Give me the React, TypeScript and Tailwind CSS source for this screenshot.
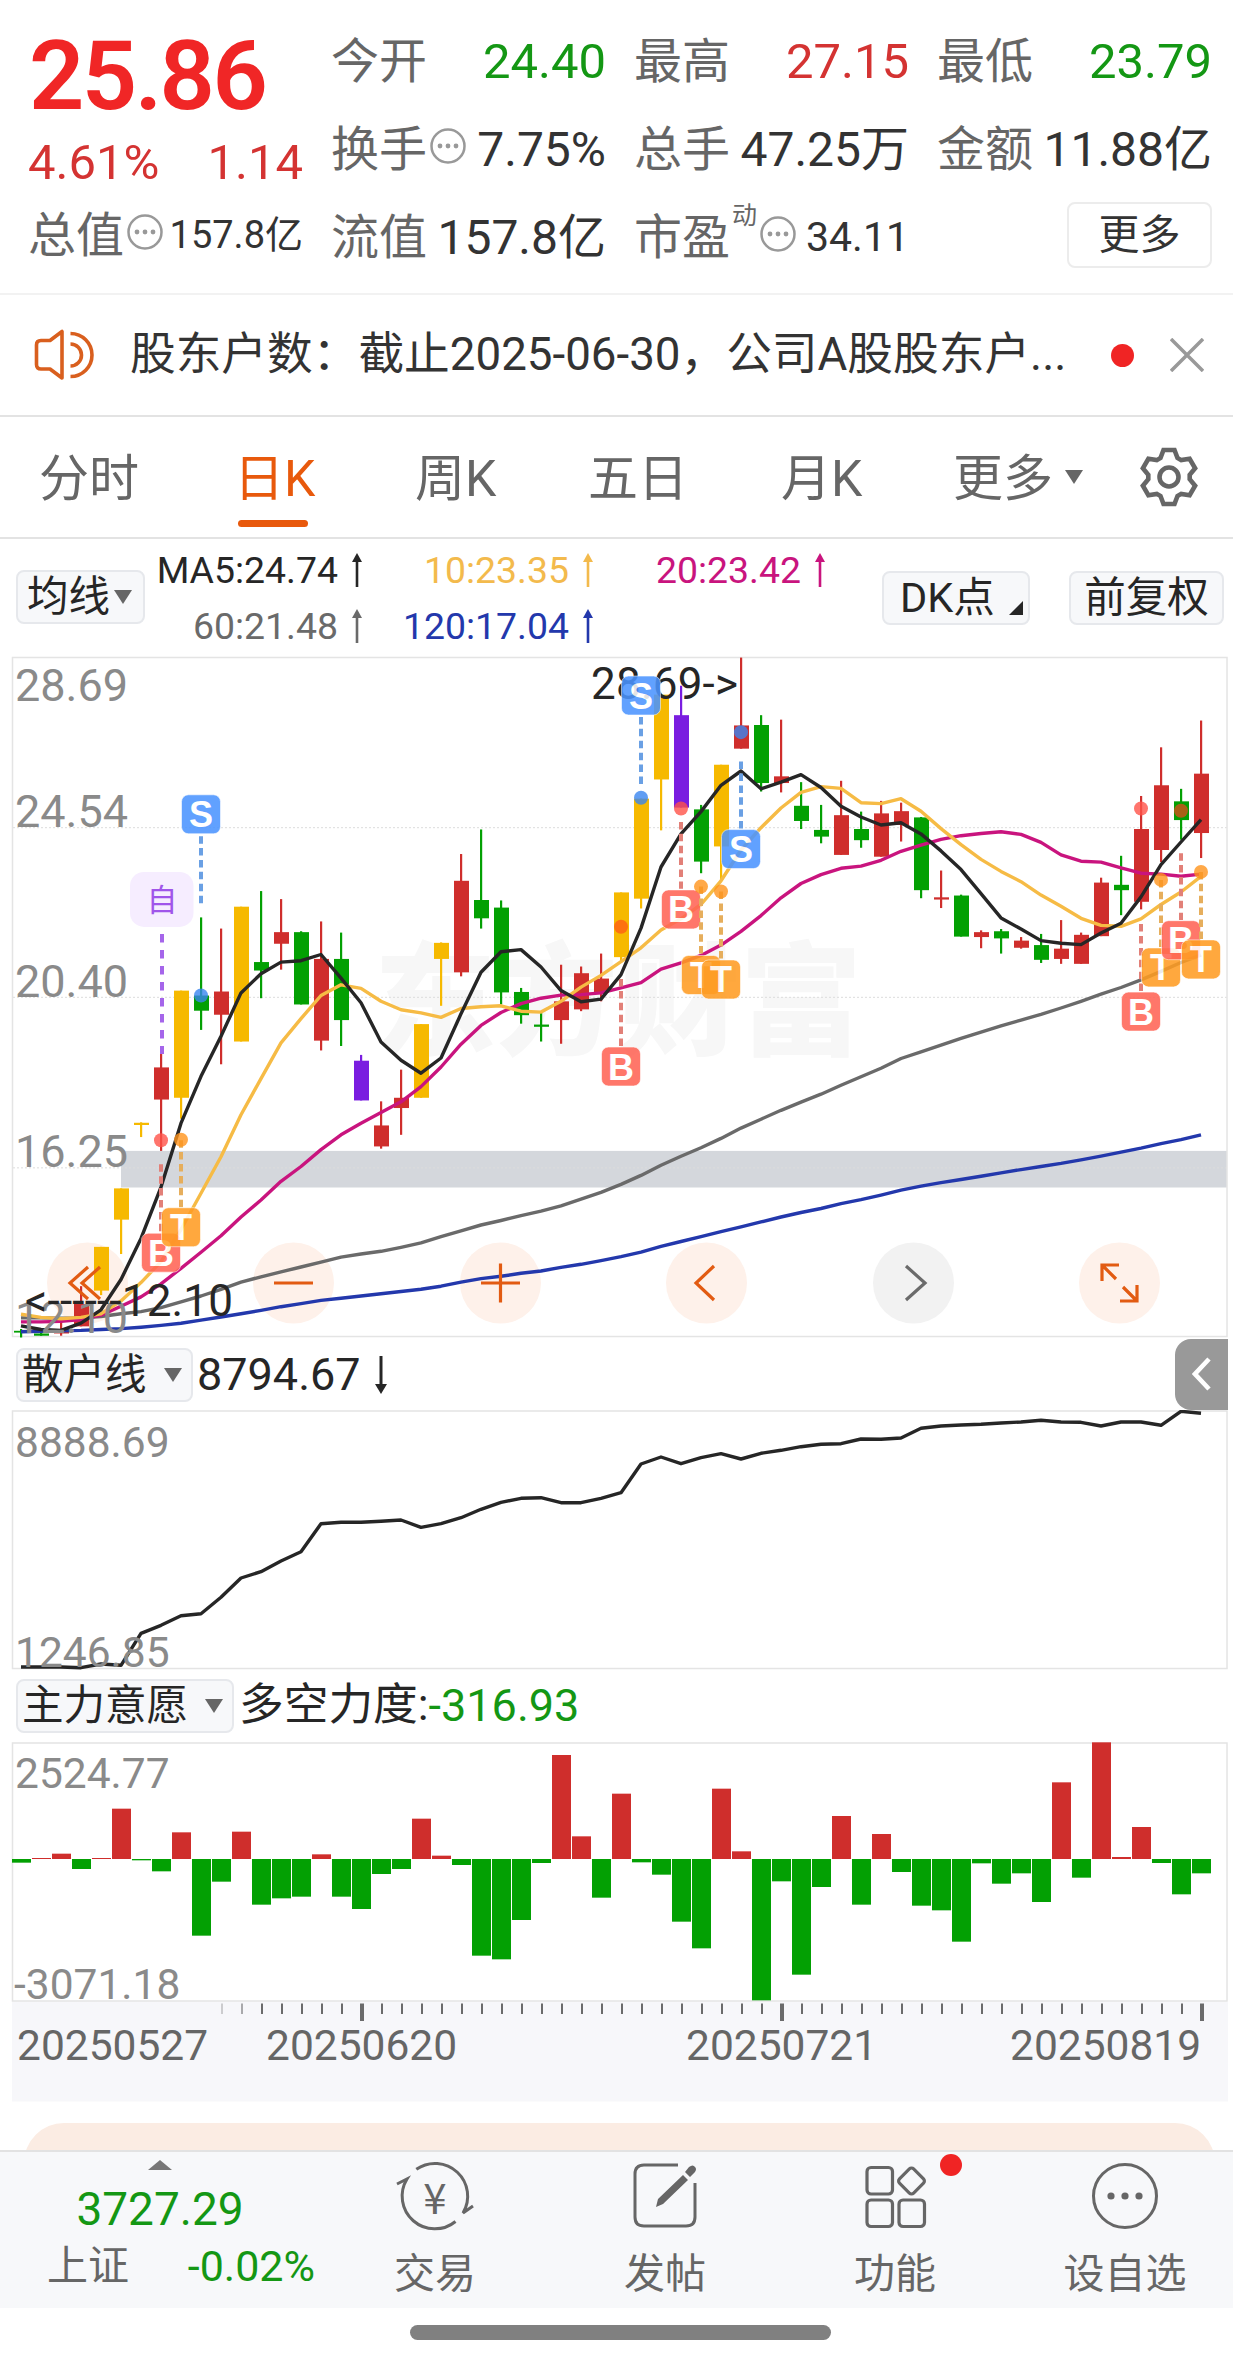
import type { ReactNode } from 'react';

const UP = '#cf2e2c';
const DOWN = '#03a003';
const LIMIT = '#f6b900';
const SPECIAL = '#7a1de0';

// 蜡烛: [颜色, 最高, 实体上沿, 实体下沿, 最低]
type Candle = [string, number, number, number, number];

const CANDLES: Candle[] = [
  [DOWN, 1521, 1525, 1529, 1540],
  [DOWN, 1530, 1531, 1536, 1536],
  [UP, 1500, 1526, 1531, 1536],
  [UP, 1425, 1465, 1515, 1515],
  [LIMIT, 1337, 1337, 1435, 1445],
  [LIMIT, 1206, 1206, 1276, 1353],
  [LIMIT, 1058, 1059, 1064, 1091],
  [UP, 905, 935, 1007, 1122],
  [LIMIT, 763, 763, 1003, 1050],
  [DOWN, 599, 774, 808, 851],
  [UP, 624, 765, 817, 928],
  [LIMIT, 575, 575, 877, 877],
  [DOWN, 540, 699, 718, 780],
  [UP, 558, 632, 658, 716],
  [DOWN, 630, 632, 794, 794],
  [UP, 608, 692, 875, 897],
  [DOWN, 633, 692, 829, 887],
  [SPECIAL, 907, 920, 1009, 1009],
  [UP, 1011, 1065, 1112, 1117],
  [UP, 940, 1003, 1026, 1086],
  [LIMIT, 838, 838, 1003, 1003],
  [LIMIT, 655, 656, 692, 797],
  [UP, 457, 517, 722, 731],
  [DOWN, 402, 560, 601, 624],
  [DOWN, 561, 577, 767, 794],
  [DOWN, 757, 766, 818, 837],
  [DOWN, 812, 839, 844, 877],
  [UP, 705, 787, 829, 882],
  [UP, 709, 724, 805, 809],
  [UP, 680, 736, 767, 787],
  [LIMIT, 543, 543, 688, 700],
  [LIMIT, 333, 333, 557, 579],
  [LIMIT, 100, 100, 290, 404],
  [SPECIAL, 80, 146, 353, 353],
  [DOWN, 347, 357, 474, 500],
  [LIMIT, 257, 257, 440, 515],
  [UP, 17, 169, 221, 221],
  [DOWN, 146, 168, 298, 317],
  [UP, 156, 283, 298, 319],
  [DOWN, 296, 349, 383, 401],
  [DOWN, 347, 403, 418, 433],
  [UP, 293, 370, 459, 459],
  [DOWN, 362, 401, 426, 443],
  [UP, 338, 366, 463, 463],
  [UP, 342, 361, 392, 429],
  [DOWN, 374, 375, 538, 556],
  [UP, 494, 554, 559, 578],
  [DOWN, 548, 550, 642, 642],
  [UP, 628, 632, 643, 668],
  [DOWN, 625, 630, 646, 680],
  [UP, 643, 651, 667, 669],
  [DOWN, 636, 661, 694, 701],
  [UP, 605, 669, 692, 703],
  [UP, 633, 638, 703, 703],
  [UP, 510, 521, 641, 641],
  [DOWN, 461, 526, 538, 594],
  [UP, 327, 401, 564, 581],
  [UP, 218, 303, 448, 475],
  [DOWN, 311, 339, 381, 425],
  [UP, 158, 277, 410, 466],
];

const MA5 = [1514, 1522, 1524, 1508, 1478, 1410, 1318, 1203, 1060, 955, 865, 768, 725, 699, 696, 682, 735, 790, 878, 919, 948, 914, 815, 722, 676, 671, 710, 763, 788, 782, 727, 623, 486, 412, 362, 303, 271, 311, 296, 279, 308, 350, 374, 392, 387, 412, 450, 492, 546, 600, 625, 651, 657, 660, 634, 612, 553, 481, 430, 380];
const MA10 = [1488, 1495, 1498, 1495, 1487, 1458, 1417, 1370, 1298, 1217, 1135, 1041, 960, 880, 826, 774, 750, 758, 787, 806, 813, 823, 803, 799, 797, 809, 811, 787, 755, 729, 698, 667, 627, 602, 570, 517, 448, 398, 354, 319, 306, 310, 342, 344, 333, 361, 400, 436, 469, 496, 519, 549, 574, 601, 617, 619, 602, 570, 542, 507];
const MA20 = [1505, 1505, 1504, 1500, 1490, 1470, 1449, 1420, 1385, 1349, 1312, 1270, 1232, 1190, 1157, 1119, 1086, 1060, 1036, 1012, 978, 934, 883, 841, 812, 792, 780, 773, 772, 768, 757, 745, 715, 701, 684, 661, 630, 595, 555, 523, 503, 489, 484, 471, 451, 437, 424, 416, 411, 407, 413, 431, 459, 473, 475, 488, 500, 502, 507, 502];
const MA60 = [1496, 1496, 1497, 1496, 1493, 1487, 1482, 1473, 1460, 1447, 1432, 1416, 1404, 1393, 1382, 1371, 1360, 1353, 1347, 1338, 1328, 1314, 1301, 1288, 1278, 1267, 1257, 1245, 1230, 1215, 1197, 1177, 1154, 1134, 1115, 1094, 1071, 1051, 1031, 1013, 995, 975, 956, 937, 915, 900, 885, 870, 856, 842, 829, 816, 802, 787, 771, 756, 739, 720, 700, 683];
const MA120 = [1527, 1526, 1525, 1524, 1522, 1520, 1517, 1513, 1508, 1501, 1494, 1487, 1479, 1471, 1464, 1457, 1452, 1447, 1442, 1437, 1432, 1425, 1416, 1408, 1403, 1396, 1391, 1383, 1376, 1368, 1359, 1349, 1336, 1325, 1314, 1303, 1292, 1281, 1270, 1260, 1251, 1240, 1231, 1221, 1210, 1201, 1193, 1186, 1179, 1171, 1164, 1157, 1150, 1142, 1134, 1125, 1116, 1106, 1097, 1086];

const RETAIL = [1011, 1011, 1011, 1013, 1002, 1006, 910, 886, 857, 851, 802, 744, 725, 693, 665, 581, 577, 577, 574, 570, 592, 581, 563, 538, 517, 505, 503, 518, 518, 505, 488, 402, 381, 401, 383, 371, 387, 370, 361, 350, 343, 341, 327, 328, 324, 295, 288, 285, 283, 279, 276, 271, 276, 277, 288, 276, 276, 286, 244, 250];

const FORCE = [-11, 2, 16, -30, 2, 151, -4, -37, 80, -230, -68, 82, -137, -118, -113, 14, -113, -150, -45, -30, 121, 10, -18, -290, -301, -183, -12, 312, 68, -116, 196, -10, -47, -188, -268, 211, 23, -424, -67, -347, -84, 129, -137, 75, -39, -140, -154, -248, -13, -74, -43, -129, 230, -56, 350, 6, 96, -12, -106, -43];

// 买卖点标记
type Kind = 'S' | 'B' | 'T';
interface Mark {
  i: number;
  kind: Kind;
  y: number;
  dash: [number, number];
  dot: number;
  dotColor?: string;
}

const MARKS: Mark[] = [
  { i: 7, kind: 'B', y: 1350, dash: [1152, 1306], dot: 1098 },
  { i: 8, kind: 'T', y: 1293, dash: [1098, 1250], dot: 1097 },
  { i: 9, kind: 'S', y: 368, dash: [417, 567], dot: 774 },
  { i: 30, kind: 'B', y: 933, dash: [737, 887], dot: 620, dotColor: '#ff5f14' },
  { i: 31, kind: 'S', y: 102, dash: [150, 300], dot: 331 },
  { i: 33, kind: 'B', y: 581, dash: [385, 535], dot: 355 },
  { i: 34, kind: 'T', y: 728, dash: [530, 680], dot: 530 },
  { i: 35, kind: 'T', y: 738, dash: [541, 691], dot: 541 },
  { i: 36, kind: 'S', y: 446, dash: [250, 400], dot: 184 },
  { i: 56, kind: 'B', y: 810, dash: [614, 764], dot: 355 },
  { i: 57, kind: 'T', y: 711, dash: [515, 668], dot: 515 },
  { i: 58, kind: 'B', y: 650, dash: [455, 605], dot: 360, dotColor: '#d5501c' },
  { i: 59, kind: 'T', y: 693, dash: [497, 650], dot: 497 },
];

const MARK_COLORS: Record<Kind, { box: string; dash: string; dot: string }> = {
  S: { box: '#4a94ff', dash: '#6aa0e4', dot: '#3a86f0' },
  B: { box: '#ff6455', dash: '#e28078', dot: '#ff5348' },
  T: { box: '#ff9c22', dash: '#e6ae5c', dot: '#ff941c' },
};

const colX = (i: number) => 21 + i * 20;
const priceY = (v: number) => v / 2.24;
const toPoints = (values: number[], toY: (v: number) => number) =>
  values.map((v, i) => `${colX(i)},${toY(v).toFixed(1)}`).join(' ');

const AXIS = 'fill-[#8a8a8a]';

function MarkBadge({ mark }: { mark: Mark }) {
  const c = MARK_COLORS[mark.kind];
  const x = colX(mark.i);
  return (
    <g>
      <line x1={x} x2={x} y1={priceY(mark.dash[0])} y2={priceY(mark.dash[1])} stroke={c.dash} strokeWidth={4} strokeDasharray="7.5 4.4" />
      <circle cx={x} cy={priceY(mark.dot)} r={7} fill={mark.dotColor ?? c.dot} opacity={0.8} />
      <g opacity={0.87}>
        <rect x={x - 19.5} y={priceY(mark.y) - 19.5} width={39} height={39} rx={7} fill={c.box} stroke="#ffffff" strokeOpacity={0.6} />
        <text x={x} y={priceY(mark.y) + 13} textAnchor="middle" fontSize={36} fontWeight={700} fill="#fff" className="font-['Liberation_Sans']">
          {mark.kind}
        </text>
      </g>
    </g>
  );
}

const CONTROLS = [
  { x: 87.5, d: 'M88 -16 l-18 16 l18 16 M100 -16 l-18 16 l18 16' },
  { x: 293.5, d: 'M274 0 h39' },
  { x: 500.5, d: 'M481 0 h39 M500.5 -19.5 v39' },
  { x: 706.5, d: 'M714 -17 l-18 17 l18 17' },
  { x: 913.5, d: 'M906 -17 l19 17 l-19 17', muted: true },
  { x: 1119.5, d: 'M1102 -2 v-16 h17 M1102 -18 l14 14 M1137 2 v16 h-17 M1137 18 l-14 -14' },
];

function KLineChart() {
  return (
    <svg width="1233" height="690" viewBox="0 0 1233 690" className="block">
      <text x="374" y="395" fontSize="122" fontWeight="900" fill="#f7f7f7">东方财富</text>
      <rect x="121" y={priceY(1122)} width="1106" height={priceY(82)} fill="#d4d7dc" />
      {[398, 778, 1160].map((v) => (
        <line key={v} x1="13" x2="1227" y1={priceY(v)} y2={priceY(v)} stroke="#dcdcdc" strokeWidth="1" strokeDasharray="2 2" />
      ))}
      <rect x="12.5" y="7.5" width="1214.5" height="679" fill="none" stroke="#e4e4e4" strokeWidth="1.5" />

      {CONTROLS.map((c) => (
        <circle key={c.x} cx={c.x} cy="633" r="40.5" fill={c.muted ? '#f2f2f2' : '#fef1ea'} />
      ))}

      {CANDLES.map(([color, high, top, bottom, low], i) => (
        <g key={i} fill={color}>
          <rect x={colX(i) - 1} y={priceY(high)} width={2.2} height={priceY(low - high)} />
          <rect x={colX(i) - 7} y={priceY(top)} width={15} height={priceY(bottom - top)} />
        </g>
      ))}

      <g fill="none" strokeWidth="3.4" strokeLinejoin="round">
        <polyline points={toPoints(MA120, priceY)} stroke="#2338ac" />
        <polyline points={toPoints(MA60, priceY)} stroke="#6a6a6a" />
        <polyline points={toPoints(MA20, priceY)} stroke="#c9147e" />
        <polyline points={toPoints(MA10, priceY)} stroke="#f6bb45" />
        <polyline points={toPoints(MA5, priceY)} stroke="#262626" />
      </g>

      <g fontSize="45" className={AXIS}>
        <text x="15" y="50.5">28.69</text>
        <text x="15" y="176.5">24.54</text>
        <text x="15" y="346.5">20.40</text>
        <text x="15" y="516.5">16.25</text>
        <text x="15" y="683">12.10</text>
      </g>

      {CONTROLS.map((c) => (
        <path key={c.x} d={c.d} transform="translate(0 633)" fill="none" stroke={c.muted ? '#6b6b6b' : '#e25b12'} strokeWidth="3.2" />
      ))}

      <g fontSize="44" fill="#262626">
        <text x="591" y="49" textLength="147">28.69-&gt;</text>
        <text x="25" y="665.5" textLength="208">&lt;------12.10</text>
      </g>

      {/* 自选加入点 */}
      <line x1="162" x2="162" y1={priceY(636)} y2={priceY(905)} stroke="#a565ea" strokeWidth="4" strokeDasharray="8.5 7.5" />
      <rect x="130" y={priceY(497)} width="63.5" height="55" rx="14" fill="#f6edff" />
      <text x="162" y="260.5" textAnchor="middle" fontSize="31" fill="#a055ea">自</text>

      {MARKS.map((m) => (
        <MarkBadge key={m.i} mark={m} />
      ))}
    </svg>
  );
}

function RetailChart() {
  return (
    <svg width="1233" height="260" viewBox="0 0 1233 260" className="block">
      <rect x="12.5" y="1" width="1214.5" height="257.5" fill="none" stroke="#e4e4e4" strokeWidth="1.5" />
      <polyline points={toPoints(RETAIL, (v) => v / 3 - 80)} fill="none" stroke="#262626" strokeWidth="3.4" strokeLinejoin="round" />
      <g fontSize="42.5" className={AXIS}>
        <text x="15" y="46.5">8888.69</text>
        <text x="15" y="256.5">1246.85</text>
      </g>
    </svg>
  );
}

const DATES = [
  { x: 17, label: '20250527' },
  { x: 266, label: '20250620' },
  { x: 686, label: '20250721' },
  { x: 1010, label: '20250819' },
];

function ForceChart() {
  return (
    <svg width="1233" height="360" viewBox="0 0 1233 360" className="block">
      <rect x="12" y="260" width="1216" height="99.5" fill="#f7f7fa" />
      <rect x="12.5" y="1" width="1214.5" height="258" fill="none" stroke="#e4e4e4" strokeWidth="1.5" />
      {FORCE.map((v, i) => {
        const h = Math.max(Math.abs(v) / 3, 1);
        return <rect key={i} x={colX(i) - 9} y={v > 0 ? 117 - h : 117} width={19} height={h} fill={v > 0 ? UP : DOWN} />;
      })}
      {FORCE.map((_, i) => {
        if (i < 10) return null;
        const major = i === 17 || i === 38 || i === 59;
        return (
          <line
            key={i}
            x1={colX(i) + 1}
            x2={colX(i) + 1}
            y1={261.5}
            y2={major ? 279 : 272}
            stroke="#6b6b6b"
            strokeWidth={major ? 4 : 2}
            opacity={i === 10 ? 0.3 : i === 11 ? 0.55 : 1}
          />
        );
      })}
      <g fontSize="42.5" className={AXIS}>
        <text x="15" y="45.5">2524.77</text>
        <text x="14" y="257">-3071.18</text>
      </g>
      <g fontSize="42.5" fill="#666">
        {DATES.map((d) => (
          <text key={d.label} x={d.x} y="317.5">{d.label}</text>
        ))}
      </g>
    </svg>
  );
}

function MoreDots() {
  return (
    <svg width="36" height="36" viewBox="0 0 36 36" className="shrink-0 -mt-2" fill="#999">
      <circle cx="18" cy="18" r="16.5" fill="none" stroke="#999" strokeWidth="2.5" />
      <circle cx="10" cy="18" r="2.4" />
      <circle cx="18" cy="18" r="2.4" />
      <circle cx="26" cy="18" r="2.4" />
    </svg>
  );
}

function Quote({ label, value, color = 'text-[#333]', size = 'text-[48px]', dots = false, sup }: {
  label: string;
  value: string;
  color?: string;
  size?: string;
  dots?: boolean;
  sup?: string;
}) {
  return (
    <div className="flex items-center justify-between h-[88px] w-[275px] whitespace-nowrap">
      <div className="flex items-center text-[#666]">
        <span>{label}</span>
        {sup && <span className="text-[25px] -mt-11 ml-0.5">{sup}</span>}
        {dots && <span className="ml-[3px]"><MoreDots /></span>}
      </div>
      <span className={`${color} ${size}`}>{value}</span>
    </div>
  );
}

function Header() {
  return (
    <section className="flex gap-[28px] pl-[28px] pt-[18px] h-[295px] border-b-2 border-[#f2f2f2] text-[48px]">
      <div className="w-[275px]">
        <div className="h-[116px] leading-[116px] text-[97px] pl-px font-semibold text-[#f02626] tracking-[-2.6px]">25.86</div>
        <div className="h-[58px] leading-[58px] flex justify-between text-[49px] text-[#d43332]">
          <span>4.61%</span>
          <span>1.14</span>
        </div>
        <Quote label="总值" value="157.8亿" size="text-[38px]" dots />
      </div>
      <div>
        <Quote label="今开" value="24.40" color="text-[#149714]" size="text-[49px]" />
        <Quote label="换手" value="7.75%" dots />
        <Quote label="流值" value="157.8亿" />
      </div>
      <div>
        <Quote label="最高" value="27.15" color="text-[#d43332]" size="text-[49px]" />
        <Quote label="总手" value="47.25万" />
        <Quote label="市盈" value="34.11" size="text-[41px]" sup="动" dots />
      </div>
      <div className="flex flex-col">
        <Quote label="最低" value="23.79" color="text-[#149714]" size="text-[49px]" />
        <Quote label="金额" value="11.88亿" />
        <button className="self-end mt-[8px] w-[145px] h-[66px] rounded-lg border-2 border-[#ececec] text-[41px] leading-[60px] text-[#333]">
          更多
        </button>
      </div>
    </section>
  );
}

function Notice() {
  return (
    <section className="flex items-center h-[122px] border-b-2 border-[#e3e3e3] pl-[34px] pr-[29px] text-[45.7px] text-[#333]">
      <svg width="60" height="54" viewBox="0 0 60 54" fill="none" stroke="#d95f1e" strokeWidth="3.6" className="shrink-0">
        <path d="M2.5 17 q0 -4.5 4.5 -4.5 h9 L28 3.5 V50 L16 41 H7 q-4.5 0 -4.5 -4.5 Z" strokeLinejoin="round" />
        <path d="M36.5 5.5 a21.5 21.5 0 0 1 0 43 M36.5 16 a11 11 0 0 1 0 22" />
      </svg>
      <p className="ml-[36px] whitespace-nowrap">股东户数：截止2025-06-30，公司A股股东户...</p>
      <span className="ml-auto w-[23px] h-[23px] rounded-full bg-[#f02424]" />
      <svg width="34" height="34" viewBox="0 0 34 34" stroke="#999" strokeWidth="3.5" className="ml-9">
        <path d="M1 1 L33 33 M33 1 L1 33" />
      </svg>
    </section>
  );
}

// 六齿齿轮轮廓
const GEAR = Array.from({ length: 6 })
  .flatMap((_, k) => {
    const a = (k * Math.PI) / 3;
    return [[-8.5, -19], [-5.5, -27], [5.5, -27], [8.5, -19]].map(
      ([x, y]) => `${(x * Math.cos(a) - y * Math.sin(a)).toFixed(2)},${(x * Math.sin(a) + y * Math.cos(a)).toFixed(2)}`
    );
  })
  .join(' ');

function Caret({ className = '' }: { className?: string }) {
  return (
    <svg width="18" height="14" viewBox="0 0 18 14" className={`shrink-0 ${className}`}>
      <path d="M0 0 H18 L9 14 Z" fill="#666" />
    </svg>
  );
}

function PeriodTabs() {
  return (
    <nav className="flex items-center h-[122px] border-b-2 border-[#e3e3e3] pl-[39px] text-[50px] text-[#666] whitespace-nowrap">
      <span className="w-[195px] pt-1">分时</span>
      <span className="w-[181px] pt-1 relative text-[#e8590c]">
        日K
        <i className="absolute left-[4px] -bottom-[18px] w-[70px] h-[7px] rounded-full bg-[#e8590c]" />
      </span>
      <span className="w-[173px] pt-1">周K</span>
      <span className="w-[193px] pt-1">五日</span>
      <span className="w-[172px] pt-1">月K</span>
      <span className="pt-1">更多</span>
      <Caret className="ml-[12px]" />
      <svg width="60" height="60" viewBox="-30 -30 60 60" fill="none" stroke="#666" strokeWidth="4.6" className="ml-auto mr-[34px]">
        <polygon points={GEAR} />
        <circle r="9.5" />
      </svg>
    </nav>
  );
}

function Chip({ children, className = '' }: { children: ReactNode; className?: string }) {
  return (
    <button className={`flex items-center h-[54px] rounded-lg border-2 border-[#e6e8ec] bg-[#f7f8fa] text-[41.5px] leading-[50px] text-[#262626] whitespace-nowrap ${className}`}>
      {children}
    </button>
  );
}

function ArrowUp() {
  return (
    <svg width="12" height="34" viewBox="0 0 12 34" className="ml-[13px] shrink-0" stroke="currentColor" fill="currentColor">
      <path d="M6 5 V34" strokeWidth="2.6" />
      <path d="M6 0 L11 9 H1 Z" stroke="none" />
    </svg>
  );
}

function Ma({ text, className }: { text: string; className: string }) {
  return (
    <span className={`flex items-center justify-end ${className}`}>
      {text}
      <ArrowUp />
    </span>
  );
}

function MaBar() {
  return (
    <section className="flex h-[111px] pl-4 pr-[9px]">
      <Chip className="mt-[31px] w-[129px] pl-[9px]">
        均线
        <Caret className="ml-[4px]" />
      </Chip>
      <div className="grid grid-cols-[218px_231px_232px] grid-rows-[56px_56px] text-[37.4px] leading-[56px] mt-[3px]">
        <Ma text="MA5:24.74" className="text-[#262626]" />
        <Ma text="10:23.35" className="text-[#f3ba4c]" />
        <Ma text="20:23.42" className="text-[#c9147e]" />
        <Ma text="60:21.48" className="text-[#6a6a6a]" />
        <Ma text="120:17.04" className="text-[#2338ac]" />
      </div>
      <Chip className="mt-[32px] ml-auto w-[148px] pl-4">
        DK点
        <svg width="14" height="14" viewBox="0 0 14 14" className="ml-auto mr-[5px] mt-5">
          <path d="M14 0 V14 H0 Z" fill="#262626" />
        </svg>
      </Chip>
      <Chip className="mt-[32px] ml-[39px] w-[155px] justify-center">前复权</Chip>
    </section>
  );
}

function BottomBar() {
  const item = 'flex flex-col items-center w-[230px] shrink-0 pt-[9px]';
  return (
    <nav className="flex h-[158px] overflow-hidden border-t-2 border-[#e2e2e2] bg-[#f7f8fa] text-[41px] text-[#666]">
      <div className="w-[320px] shrink-0 flex flex-col items-center pt-[8px]">
        <svg width="24" height="10" viewBox="0 0 24 10">
          <path d="M0 10 L12 0 L24 10 Z" fill="#777" />
        </svg>
        <span className="mt-[12px] text-[46px] leading-[54px] text-[#149714]">3727.29</span>
        <div className="flex items-center justify-between w-[268px] ml-[42px] mt-[2px] leading-[56px]">
          <span>上证</span>
          <span className="text-[43px] text-[#149714]">-0.02%</span>
        </div>
      </div>
      <div className={item}>
        <svg width="80" height="70" viewBox="-40 -35 80 70" fill="none" stroke="#666" strokeWidth="3">
          <path d="M-18.7 -26.7 A32.7 32.7 0 0 1 28 17 l10 -7" />
          <path d="M20.5 25.5 A32.7 32.7 0 0 1 -28 -17 l-10 5" />
          <text y="18" textAnchor="middle" fontSize="42" fill="#666" stroke="none" className="font-['Noto_Sans_CJK_SC']">¥</text>
        </svg>
        <span className="mt-[13px] leading-[60px]">交易</span>
      </div>
      <div className={item}>
        <svg width="80" height="70" viewBox="-40 -35 80 70" fill="none" stroke="#666" strokeWidth="3">
          <path d="M13 -31 H-21 q-9 0 -9 9 V21 q0 9 9 9 H21 q9 0 9 -9 V-13" />
          <path d="M-9 11 L-7 3 L18 -21 L23 -16 L-2 8 Z M20 -24 L24 -29 q4 -3 6 0 q2 2 0 5 L25 -19 Z" fill="#666" stroke="none" />
        </svg>
        <span className="mt-[13px] leading-[60px]">发帖</span>
      </div>
      <div className={`relative ${item}`}>
        <svg width="80" height="70" viewBox="-40 -35 80 70" fill="none" stroke="#666" strokeWidth="3.2">
          <rect x="-28" y="-28.5" width="25.5" height="26.5" rx="4" />
          <rect x="-28" y="4" width="25.5" height="26.5" rx="4" />
          <rect x="4" y="4" width="25.5" height="26.5" rx="4" />
          <rect x="6.5" y="-25" width="20" height="20" rx="3" transform="rotate(45 16.5 -15)" />
        </svg>
        <i className="absolute left-[160px] top-[2px] w-[22px] h-[22px] rounded-full bg-[#f02424]" />
        <span className="mt-[13px] leading-[60px]">功能</span>
      </div>
      <div className={item}>
        <svg width="80" height="70" viewBox="-40 -35 80 70" fill="#666">
          <circle r="31.5" fill="none" stroke="#666" strokeWidth="3" />
          <circle cx="-14" r="3.6" />
          <circle r="3.6" />
          <circle cx="14" r="3.6" />
        </svg>
        <span className="mt-[13px] leading-[60px]">设自选</span>
      </div>
    </nav>
  );
}

export default function App() {
  return (
    <div className="w-[1233px] h-[2365px] overflow-hidden bg-white font-[Roboto,'Noto_Sans_CJK_SC',sans-serif] leading-[1.2]">
      <Header />
      <Notice />
      <PeriodTabs />
      <MaBar />
      <KLineChart />

      <div className="flex items-center h-[70px] pl-4">
        <Chip className="w-[177px] pl-[4px]">
          散户线
          <Caret className="ml-auto mr-[9px]" />
        </Chip>
        <span className="ml-[4px] text-[45px] text-[#262626]">8794.67</span>
        <svg width="16" height="38" viewBox="0 0 16 38" className="ml-3">
          <path d="M8 0 V32" stroke="#262626" strokeWidth="3" />
          <path d="M8 38 L2 28 H14 Z" fill="#262626" />
        </svg>
        <button className="ml-auto mr-[5px] -mt-[2px] flex items-center justify-center w-[53px] h-[71px] rounded-l-2xl bg-[#999]">
          <svg width="20" height="34" viewBox="0 0 20 34" fill="none" stroke="#fff" strokeWidth="4.6">
            <path d="M17 2 L3 17 L17 32" />
          </svg>
        </button>
      </div>
      <RetailChart />

      <div className="flex items-center h-[72px] pl-4 text-[#262626]">
        <Chip className="w-[218px] pl-[4px]">
          主力意愿
          <Caret className="ml-auto mr-[9px]" />
        </Chip>
        <span className="ml-[5px] text-[44.7px]">多空力度:</span>
        <span className="text-[45px] text-[#149714]">-316.93</span>
      </div>
      <ForceChart />

      <div className="h-[48px] pt-[21px] overflow-hidden">
        <div className="ml-[24px] mr-[18px] h-[80px] rounded-[46px] bg-[#fbece3]" />
      </div>
      <BottomBar />
      <div className="flex justify-center pt-[17px] pl-[7px]">
        <div className="w-[421px] h-[15px] rounded-full bg-[#808080]" />
      </div>
    </div>
  );
}
